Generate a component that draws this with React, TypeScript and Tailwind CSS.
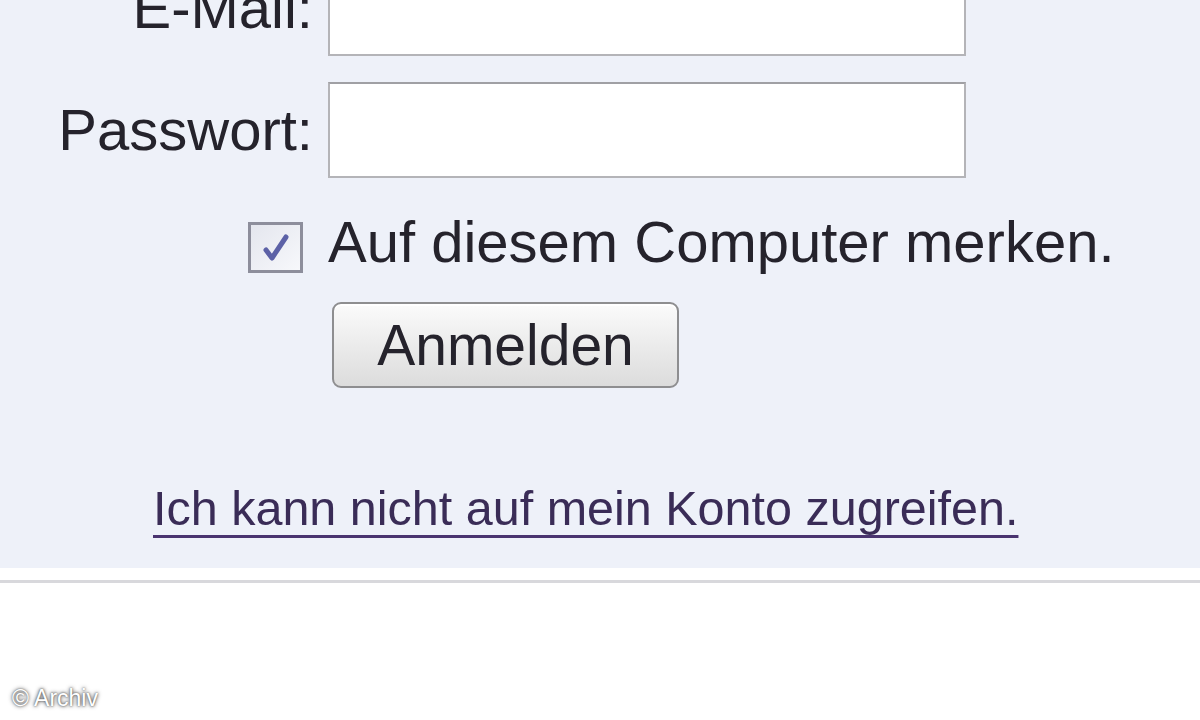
export default function App() {
  return (
    <div className="relative h-[720px] w-[1200px] overflow-hidden bg-white font-['Liberation_Sans',Arial,sans-serif]">
      {/* Login box */}
      <div className="flex h-[568px] flex-col bg-[#eef1f9]">
        <div className="mt-[-40px] flex items-center">
          <label className="w-[313px] text-right text-[58px] leading-none text-[#25232c]">E-Mail:</label>
          <input
            type="text"
            className="ml-[15px] h-[96px] w-[638px] border-2 border-[#b4b4b8] border-t-[#a0a0a4] bg-white outline-none"
          />
        </div>
        <div className="mt-[26px] flex items-center">
          <label className="w-[313px] text-right text-[58px] leading-none text-[#25232c]">Passwort:</label>
          <input
            type="password"
            className="ml-[15px] h-[96px] w-[638px] border-2 border-[#b4b4b8] border-t-[#a0a0a4] bg-white outline-none"
          />
        </div>

        <div className="mt-[44px] flex items-start gap-[25px] pl-[248px]">
          <div className="flex h-[51px] w-[55px] items-center justify-center border-[3px] border-[#8d8e9c] bg-gradient-to-br from-[#e4e6ee] to-[#f7f8fb]">
            <svg width="34" height="34" viewBox="0 0 34 34">
              <path
                d="M7 19 L13 27 L27 6"
                fill="none"
                stroke="#5c61a6"
                strokeWidth="5"
                strokeLinecap="round"
                strokeLinejoin="round"
              />
            </svg>
          </div>
          <span className="-mt-[9px] text-[58px] leading-none text-[#25232c]">Auf diesem Computer merken.</span>
        </div>

        <button className="ml-[332px] mt-[29px] h-[86px] w-[347px] rounded-[9px] border-2 border-[#8e8e90] bg-gradient-to-b from-[#fbfbfb] to-[#dcdcdc] text-[57px] leading-none text-[#25232c] shadow-[inset_0_2px_0_#ffffff]">
          Anmelden
        </button>

        <a
          href="#"
          className="ml-[153px] mt-[96px] self-start text-[48.5px] leading-none text-[#3a2c57] underline decoration-[#4a3470] decoration-[3px] underline-offset-[10px] [text-decoration-skip-ink:none]"
        >
          Ich kann nicht auf mein Konto zugreifen.
        </a>
      </div>

      <div className="mt-[12px] h-[3px] bg-[#d8d8dc]" />

      <span className="absolute bottom-[10px] left-[12px] text-[23px] leading-none text-white [text-shadow:0_0_4px_#444,0_0_2px_#555]">
        © Archiv
      </span>
    </div>
  )
}
